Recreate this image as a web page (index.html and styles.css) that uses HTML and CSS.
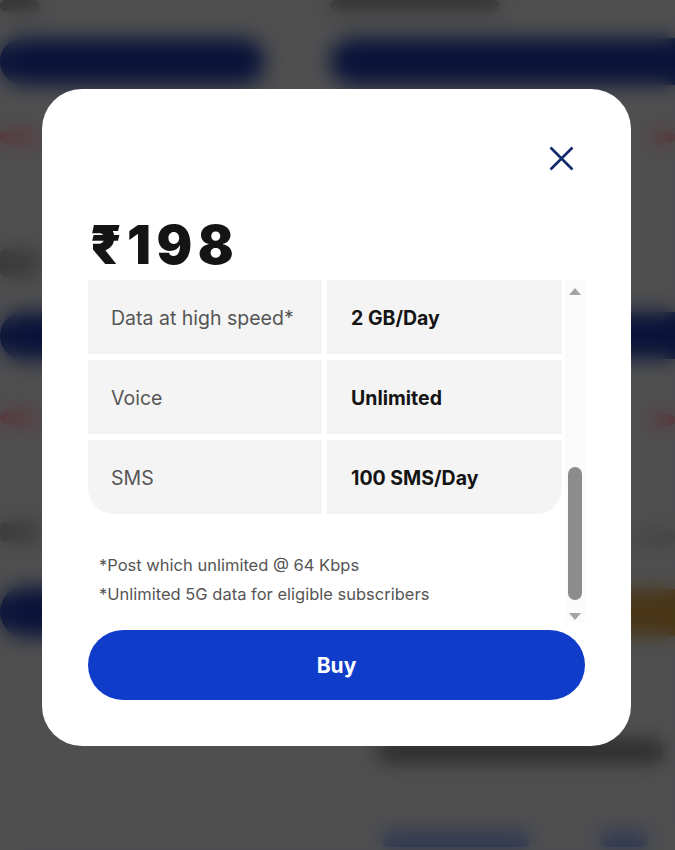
FILE: index.html
```html
<!DOCTYPE html>
<html lang="en">
<head>
<meta charset="utf-8">
<title>Plan details</title>
<link rel="stylesheet" href="styles.css">
</head>
<body>
<div class="page" aria-hidden="true">
  <div class="col col-left">
    <div class="blk b-top"></div>
    <div class="blk b-navy b-n1"></div>
    <div class="blk b-red b-r1"></div>
    <div class="blk b-dark b-d1"></div>
    <div class="blk b-navy b-n2"></div>
    <div class="blk b-red b-r2"></div>
    <div class="blk b-dark b-d2"></div>
    <div class="blk b-navy b-n3"></div>
  </div>
  <div class="col col-right">
    <div class="blk b-top b-top-r"></div>
    <div class="blk b-navy b-n1 wide"></div>
    <div class="blk b-red b-r1 push"></div>
    <div class="blk b-navy b-n2r wide"></div>
    <div class="blk b-red b-r2r push"></div>
    <div class="blk b-dark b-d2r"></div>
    <div class="blk b-orange"></div>
    <div class="blk b-head"></div>
    <div class="b-links"><div class="blk b-link1"></div><div class="blk b-link2"></div></div>
  </div>
</div>

<div class="overlay">
  <div class="modal" role="dialog" aria-label="Plan details">
    <div class="modal-head">
      <button class="close" aria-label="Close">
        <svg width="25" height="25" viewBox="0 0 25 25"><path d="M1.5 1.5 L23.5 23.5 M23.5 1.5 L1.5 23.5" stroke="#10296b" stroke-width="2.6" stroke-linecap="butt" fill="none"/></svg>
      </button>
    </div>
    <div class="price">₹198</div>
    <div class="scroll">
      <div class="scroll-content">
        <div class="benefits">
          <div class="cell label">Data at high speed*</div>
          <div class="cell value">2 GB/Day</div>
          <div class="cell label">Voice</div>
          <div class="cell value">Unlimited</div>
          <div class="cell label last-l">SMS</div>
          <div class="cell value last-r">100 SMS/Day</div>
        </div>
        <div class="notes">
          <p>*Post which unlimited @ 64 Kbps</p>
          <p>*Unlimited 5G data for eligible subscribers</p>
        </div>
      </div>
      <div class="scrollbar">
        <div class="arrow-box up"><span class="tri tri-up"></span></div>
        <div class="track"><div class="thumb"></div></div>
        <div class="arrow-box down"><span class="tri tri-down"></span></div>
      </div>
    </div>
    <button class="buy">Buy</button>
  </div>
</div>
</body>
</html>
```

FILE: styles.css
```css
html, body {
  margin: 0;
  padding: 0;
}
body {
  width: 675px;
  height: 850px;
  overflow: hidden;
  background: #4f4f50;
  font-family: "Inter", "Liberation Sans", "DejaVu Sans", sans-serif;
  position: relative;
}

/* page behind the dialog (blurred by the overlay) */
.page {
  display: grid;
  grid-template-columns: 290px 345px;
  column-gap: 40px;
  width: 675px;
}
.col {
  display: flex;
  flex-direction: column;
  align-items: flex-start;
}
.blk { border-radius: 6px; }
.b-top { height: 12px; width: 40px; background: #353536; }
.b-top-r { width: 170px; }
.b-navy { background: #0a1439; border-radius: 26px; width: 265px; }
.wide { width: 345px; border-radius: 26px 0 0 26px; }
.b-n1 { margin-top: 26px; height: 47px; }
.b-red { background: #5a3238; height: 12px; width: 40px; }
.b-r1 { margin-top: 46px; }
.push { margin-left: 320px; width: 25px; }
.b-dark { background: #3a3a3b; width: 40px; }
.b-d1 { margin-top: 106px; height: 28px; }
.b-n2 { margin-top: 35px; height: 48px; }
.b-r2 { margin-top: 52px; }
.b-d2 { margin-top: 98px; height: 20px; }
.b-n3 { margin-top: 45px; height: 50px; }
.b-n2r { margin-top: 169px; height: 47px; }
.b-r2r { margin-top: 55px; }
.b-d2r { margin-top: 104px; height: 16px; margin-left: 300px; width: 45px; background: #444444; }
.b-orange { margin-top: 43px; height: 47px; width: 345px; background: #4a3517; border-radius: 26px 0 0 26px; }
.b-head { margin-top: 105px; margin-left: 48px; height: 20px; width: 285px; background: #262626; }
.b-links { display: flex; gap: 70px; margin-top: 70px; margin-left: 52px; }
.b-link1 { width: 148px; height: 16px; background: #2f3852; }
.b-link2 { width: 48px; height: 16px; background: #2f3852; }

/* dialog */
.overlay {
  position: absolute;
  inset: 0;
  padding: 89px 0 0 42px;
  box-sizing: border-box;
  -webkit-backdrop-filter: blur(10px);
  backdrop-filter: blur(10px);
}
.modal {
  width: 589px;
  height: 657px;
  box-sizing: border-box;
  background: #ffffff;
  border-radius: 40px;
  padding: 57px 46px 46px;
  display: flex;
  flex-direction: column;
}
.modal-head {
  display: flex;
  justify-content: flex-end;
  height: 25px;
  padding-right: 11px;
}
.close {
  border: 0;
  background: none;
  padding: 0;
  width: 25px;
  height: 25px;
  display: block;
  cursor: pointer;
}
.close svg { display: block; }

.price {
  margin-top: 46px;
  font-size: 53px;
  line-height: 56px;
  height: 56px;
  font-weight: 900;
  color: #141414;
  letter-spacing: 5.5px;
  padding-left: 2px;
}

.scroll {
  margin-top: 7px;
  height: 342px;
  display: flex;
  gap: 3px;
}
.scroll-content {
  width: 474px;
  overflow: hidden;
}
.benefits {
  display: grid;
  grid-template-columns: 234px 235px;
  grid-auto-rows: 74px;
  column-gap: 5px;
  row-gap: 6px;
}
.cell {
  background: #f4f4f4;
  display: flex;
  align-items: center;
  padding-left: 23px;
  padding-top: 1px;
  font-size: 19.5px;
}
.label { color: #555555; font-weight: 400; }
.value { color: #141414; font-weight: 700; padding-left: 24px; }
.last-l { border-bottom-left-radius: 26px; }
.last-r { border-bottom-right-radius: 26px; }

.notes {
  margin-top: 37px;
  padding-left: 11px;
}
.notes p {
  margin: 0;
  font-size: 16.5px;
  line-height: 29px;
  color: #555555;
}

.scrollbar {
  width: 20px;
  display: flex;
  flex-direction: column;
  background: #fbfbfb;
}
.arrow-box {
  display: flex;
  justify-content: center;
  align-items: center;
}
.arrow-box.up { height: 22px; }
.arrow-box.down { height: 12px; }
.tri {
  width: 0;
  height: 0;
  border-left: 6px solid transparent;
  border-right: 6px solid transparent;
}
.tri-up { border-bottom: 7px solid #a3a3a3; }
.tri-down { border-top: 7px solid #a3a3a3; }
.track {
  flex: 1;
  display: flex;
  justify-content: center;
}
.thumb {
  margin-top: 165px;
  width: 14px;
  height: 133px;
  border-radius: 7px;
  background: #8c8c8c;
}

.buy {
  margin-top: 8px;
  height: 70px;
  width: 100%;
  border: 0;
  border-radius: 35px;
  background: #0f3cc9;
  color: #ffffff;
  font-family: "Inter", "Liberation Sans", sans-serif;
  font-size: 21px;
  font-weight: 700;
  cursor: pointer;
}
```
